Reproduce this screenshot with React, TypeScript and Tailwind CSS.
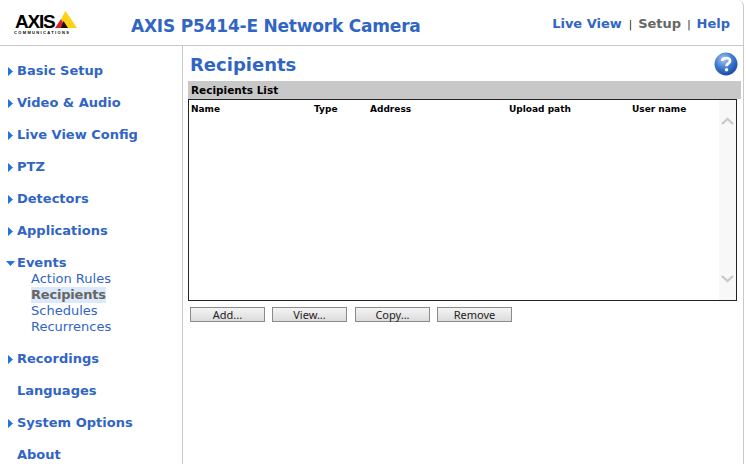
const dejavu = "font-['DejaVu_Sans',sans-serif]";

const menu = [
  { label: 'Basic Setup', arrow: 'right' },
  { label: 'Video & Audio', arrow: 'right' },
  { label: 'Live View Config', arrow: 'right' },
  { label: 'PTZ', arrow: 'right' },
  { label: 'Detectors', arrow: 'right' },
  { label: 'Applications', arrow: 'right' },
  { label: 'Events', arrow: 'down', children: ['Action Rules', 'Recipients', 'Schedules', 'Recurrences'] },
  { label: 'Recordings', arrow: 'right' },
  { label: 'Languages', arrow: 'none' },
  { label: 'System Options', arrow: 'right' },
  { label: 'About', arrow: 'none' },
];

const columns = [
  { label: 'Name', width: 'w-[123px]' },
  { label: 'Type', width: 'w-[56px]' },
  { label: 'Address', width: 'w-[139px]' },
  { label: 'Upload path', width: 'w-[123px]' },
  { label: 'User name', width: 'w-[80px]' },
];

function Arrow({ dir }: { dir: string }) {
  if (dir === 'right') {
    return (
      <svg width="5" height="9" viewBox="0 0 5 9" className="ml-[8px] mr-[4px] shrink-0">
        <path d="M0 0 L5 4.5 L0 9 Z" fill="#1b76e4" />
      </svg>
    );
  }
  if (dir === 'down') {
    return (
      <svg width="9" height="5" viewBox="0 0 9 5" className="ml-[6px] mr-[2px] shrink-0">
        <path d="M0 0 L9 0 L4.5 5 Z" fill="#1b76e4" />
      </svg>
    );
  }
  return <span className="w-[17px] shrink-0" />;
}

function Logo() {
  return (
    <div className="relative w-[64px] h-[24px] ml-[14px] mt-[11px]">
      <span className="absolute left-[1px] top-[2px] text-[19px] leading-[17px] font-bold tracking-[-1.2px] text-black font-['Liberation_Sans',sans-serif]">
        AXIS
      </span>
      <svg width="24" height="18" viewBox="0 0 24 18" className="absolute left-[40px] top-0">
        <path d="M11.5 0 L23 17 L13 17 L7 8 Z" fill="#fcd116" />
        <path d="M7 8 L12 17 L1 17 Z" fill="#d8232a" />
        <path d="M9.5 10 L14 17 L7 17 Z" fill="#111" />
      </svg>
      <span className="absolute left-0 top-[19px] text-[4px] leading-[5px] font-bold tracking-[1.35px] text-black font-['Liberation_Sans',sans-serif]">
        COMMUNICATIONS
      </span>
    </div>
  );
}

function HelpIcon() {
  return (
    <svg width="24" height="24" viewBox="0 0 23 23" className="shrink-0">
      <defs>
        <radialGradient id="helpFill" cx="40%" cy="30%" r="75%">
          <stop offset="0%" stopColor="#a9c9f2" />
          <stop offset="55%" stopColor="#3a76cf" />
          <stop offset="100%" stopColor="#1745a0" />
        </radialGradient>
      </defs>
      <circle cx="11.5" cy="11.5" r="11" fill="url(#helpFill)" />
      <path d="M7.8 8.6 C8 5 15.4 4.7 15.4 8.6 C15.4 11 12 11 12 13.6" fill="none" stroke="#fff" strokeWidth="2.6" />
      <circle cx="12" cy="17" r="1.7" fill="#fff" />
    </svg>
  );
}

function Chevron({ up }: { up?: boolean }) {
  return (
    <svg width="13" height="8" viewBox="0 0 13 8">
      <path d={up ? 'M1 7 L6.5 2 L12 7' : 'M1 1 L6.5 6 L12 1'} fill="none" stroke="#c8c8c8" strokeWidth="2.2" />
    </svg>
  );
}

function Btn({ label }: { label: string }) {
  return (
    <button className="w-[75px] h-[15px] border border-[#8a8a8a] bg-gradient-to-b from-[#f4f4f4] to-[#dcdcdc] text-[11px] leading-[13px] text-[#222] font-['Noto_Sans',sans-serif]">
      {label}
    </button>
  );
}

export default function App() {
  return (
    <div className={`w-[746px] h-[464px] overflow-hidden bg-white ${dejavu}`}>
      <div className="w-[744px] h-full border-r border-[#c8c8c8] rounded-tr-[6px] flex flex-col">
        {/* Header */}
        <header className="h-[46px] shrink-0 flex border-b border-[#c8c8c8]">
          <div className="w-[131px] shrink-0">
            <Logo />
          </div>
          <h1 className="text-[17px] leading-[22px] mt-[15px] font-bold tracking-[-0.2px] text-[#3165c4]">
            AXIS P5414-E Network Camera
          </h1>
          <nav className="ml-auto mr-[13px] mt-[15px] flex items-center h-[18px] text-[13px] font-bold">
            <span className="text-[#3165c4]">Live View</span>
            <span className="ml-[7px] mr-[6px] font-normal text-[10px] text-[#111]">|</span>
            <span className="text-[#666]">Setup</span>
            <span className="mx-[6px] font-normal text-[10px] text-[#111]">|</span>
            <span className="text-[#3165c4]">Help</span>
          </nav>
        </header>

        <div className="flex flex-1 min-h-0">
          {/* Sidebar */}
          <aside className="w-[183px] shrink-0 border-r border-[#c8c8c8] pt-[17px]">
            {menu.map((item) => (
              <div key={item.label} className="mb-[16px]">
                <div className="flex items-center h-[16px] text-[13px] leading-4 font-bold text-[#3165c4]">
                  <Arrow dir={item.arrow} />
                  {item.label}
                </div>
                {item.children?.map((child) => (
                  <div key={child} className="h-[16px] pl-[31px] text-[13px] leading-4 text-[#3165c4]">
                    {child === 'Recipients' ? (
                      <span className="inline-block font-bold tracking-[-0.2px] text-[#666] bg-[#dbe9fb]">{child}</span>
                    ) : (
                      child
                    )}
                  </div>
                ))}
              </div>
            ))}
          </aside>

          {/* Main */}
          <main className="flex-1 min-w-0 pl-[5px] pr-[2px]">
            <div className="flex items-center justify-between h-[35px] pl-[2px] pr-[3px]">
              <h2 className="text-[18px] leading-[22px] mt-[2px] font-bold text-[#3165c4]">Recipients</h2>
              <HelpIcon />
            </div>
            <div className="h-[18px] bg-[#c8c8c8] pl-[3px] text-[10.5px] leading-[19px] font-bold text-black">
              Recipients List
            </div>
            <div className="w-[549px] h-[202px] border border-[#222] flex">
              <div className="flex-1 pl-[2px] pt-[3px]">
                <div className="flex text-[9px] leading-[13px] font-bold text-black">
                  {columns.map((col) => (
                    <span key={col.label} className={col.width}>
                      {col.label}
                    </span>
                  ))}
                </div>
              </div>
              <div className="w-[17px] shrink-0 bg-[#f8f8f8] flex flex-col items-center justify-between pt-[17px] pb-[17px]">
                <Chevron up />
                <Chevron />
              </div>
            </div>
            <div className="flex items-start mt-[6px] pl-[2px] gap-[7px]">
              <Btn label="Add..." />
              <Btn label="View..." />
              <div className="ml-px flex">
                <Btn label="Copy..." />
              </div>
              <Btn label="Remove" />
            </div>
          </main>
        </div>
      </div>
    </div>
  );
}
